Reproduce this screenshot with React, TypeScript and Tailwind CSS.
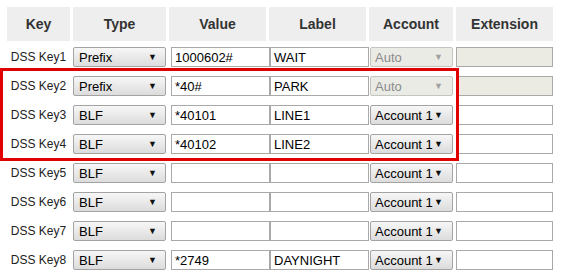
import React from 'react';

type Row = {
  key: string;
  type: string;
  value: string;
  label: string;
  account: string;
  disabled: boolean;
};

const rows: Row[] = [
  { key: 'DSS Key1', type: 'Prefix', value: '1000602#', label: 'WAIT', account: 'Auto', disabled: true },
  { key: 'DSS Key2', type: 'Prefix', value: '*40#', label: 'PARK', account: 'Auto', disabled: true },
  { key: 'DSS Key3', type: 'BLF', value: '*40101', label: 'LINE1', account: 'Account 1', disabled: false },
  { key: 'DSS Key4', type: 'BLF', value: '*40102', label: 'LINE2', account: 'Account 1', disabled: false },
  { key: 'DSS Key5', type: 'BLF', value: '', label: '', account: 'Account 1', disabled: false },
  { key: 'DSS Key6', type: 'BLF', value: '', label: '', account: 'Account 1', disabled: false },
  { key: 'DSS Key7', type: 'BLF', value: '', label: '', account: 'Account 1', disabled: false },
  { key: 'DSS Key8', type: 'BLF', value: '*2749', label: 'DAYNIGHT', account: 'Account 1', disabled: false },
];

function Select({ text, disabled, className }: { text: string; disabled?: boolean; className: string }) {
  return (
    <div
      className={
        'flex items-center justify-between h-[20px] rounded-[2px] border text-[13px] leading-none pl-[4px] ' +
        (disabled
          ? 'border-[#c4c4c0] bg-[#ebebe6] text-[#8a8a8a] '
          : 'border-[#a3a3a3] bg-gradient-to-b from-[#f7f7f7] to-[#dcdcdc] text-black ') +
        className
      }
    >
      <span className="whitespace-nowrap">{text}</span>
      <span className={'text-[9px] ' + (disabled ? 'text-[#a0a0a0]' : 'text-[#111]')}>▼</span>
    </div>
  );
}

function TextBox({ text, disabled, className }: { text: string; disabled?: boolean; className: string }) {
  return (
    <div
      className={
        'flex items-center h-[20px] border border-[#a9a9a9] text-[13px] leading-none pl-[3px] text-black whitespace-nowrap ' +
        (disabled ? 'bg-[#ebebe4] ' : 'bg-white ') +
        className
      }
    >
      {text}
    </div>
  );
}

export default function App() {
  const th = 'bg-[#eeeeee] h-[34px] p-0 text-[14px] font-bold text-[#333] text-center align-middle';
  return (
    <div className="relative w-[561px] h-[275px] bg-white overflow-hidden" style={{ fontFamily: '"Liberation Sans", Arial, sans-serif' }}>
      <table className="ml-[4px] mt-[4px] w-[552px] border-separate border-spacing-[3px] table-fixed">
        <colgroup>
          <col className="w-[63px]" />
          <col className="w-[93px]" />
          <col className="w-[97px]" />
          <col className="w-[97px]" />
          <col className="w-[84px]" />
          <col className="w-[97px]" />
        </colgroup>
        <thead>
          <tr>
            <th className={th}>Key</th>
            <th className={th}>Type</th>
            <th className={th}>Value</th>
            <th className={th}>Label</th>
            <th className={th}>Account</th>
            <th className={th}>Extension</th>
          </tr>
        </thead>
        <tbody>
          {rows.map((r) => (
            <tr key={r.key} className="h-[26px]">
              <td className="p-0 text-center text-[12px] text-[#222] whitespace-nowrap align-middle">{r.key}</td>
              <td className="p-0 align-middle">
                <Select text={r.type} className="w-[93px] pl-[5px] pr-[8px]" />
              </td>
              <td className="p-0 align-middle">
                <TextBox text={r.value} className="ml-[2px] w-[99px]" />
              </td>
              <td className="p-0 align-middle">
                <TextBox text={r.label} className="ml-[1px] w-[99px]" />
              </td>
              <td className="p-0 align-middle">
                <Select text={r.account} disabled={r.disabled} className="ml-[1px] w-[83px] pr-[9px]" />
              </td>
              <td className="p-0 align-middle">
                <TextBox text="" disabled={r.disabled} className="w-[97px]" />
              </td>
            </tr>
          ))}
        </tbody>
      </table>
      <div className="absolute left-0 top-[68px] w-[459px] h-[93px] border-[3px] border-[#e00000] pointer-events-none" />
    </div>
  );
}
